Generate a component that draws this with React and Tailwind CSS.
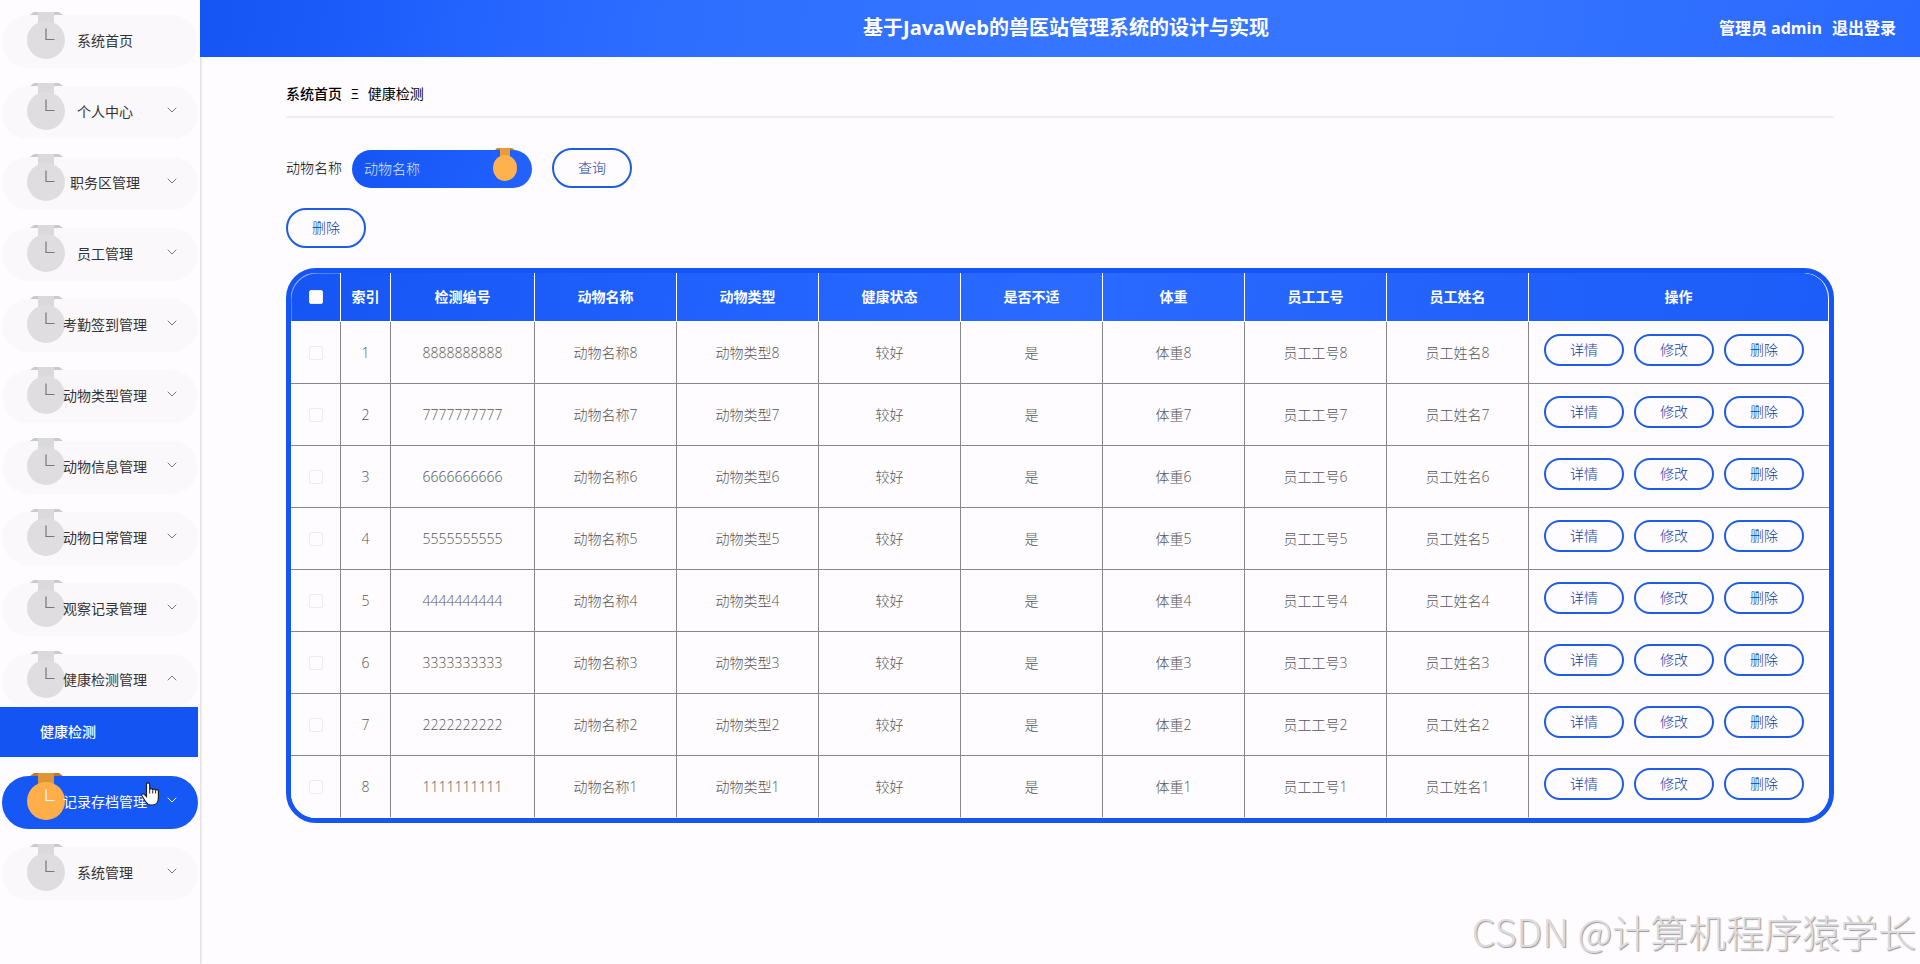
import React, { useState } from 'react';
import { ChevronDown, ChevronUp } from 'lucide-react';

const menus = [
    { name: '系统首页', leaf: true },
    { name: '个人中心' },
    { name: '职务区管理' },
    { name: '员工管理' },
    { name: '考勤签到管理' },
    { name: '动物类型管理' },
    { name: '动物信息管理' },
    { name: '动物日常管理' },
    { name: '观察记录管理' },
    { name: '健康检测管理', children: ['健康检测'] },
    { name: '记录存档管理', active: true },
    { name: '系统管理' },
];

const columns = ['检测编号', '动物名称', '动物类型', '健康状态', '是否不适', '体重', '员工工号', '员工姓名'];

const rows = [8, 7, 6, 5, 4, 3, 2, 1].map((n) => [
    String(n).repeat(10),
    `动物名称${n}`,
    `动物类型${n}`,
    '较好',
    '是',
    `体重${n}`,
    `员工工号${n}`,
    `员工姓名${n}`,
]);

const MenuMedal = ({ active }) => (
    <svg className="absolute left-6 -top-1 w-10 h-12" viewBox="0 0 40 48" aria-hidden="true">
        <path d="M4 4 L8 1 H33 L37 4 Z" fill={active ? '#c17a25' : '#cbc9cc'} />
        <rect x="12" y="1" width="16" height="14" fill={active ? '#de9437' : '#dad9db'} />
        <circle cx="20" cy="29" r="19" fill={active ? '#ffae4a' : '#dfdde0'} />
        <path d="M20 17.5 V28.5 H28.5" fill="none" stroke={active ? '#fff' : '#777'} strokeWidth="1.2" />
    </svg>
);

const MenuItem = ({ item }) => (
    <li className="mb-[18px]">
        <a
            href="#"
            className={`relative mx-[2px] flex h-[53px] items-center justify-center pb-[2px] pl-[10px] rounded-full ${
                item.active ? 'bg-[#1558f6] text-white' : 'bg-[#faf8fb] text-[#333]'
            }`}
        >
            <MenuMedal active={item.active} />
            <span className="relative">{item.name}</span>
            {!item.leaf && (
                <span className={`absolute right-[18px] top-4 ${item.active ? 'text-white' : 'text-[#777]'}`}>
                    {item.children ? (
                        <ChevronUp className="w-4 h-4" strokeWidth={1.5} />
                    ) : (
                        <ChevronDown className="w-4 h-4" strokeWidth={1.5} />
                    )}
                </span>
            )}
        </a>
        {item.children && (
            <ul className="mb-[19px]">
                {item.children.map((child) => (
                    <li key={child}>
                        <a
                            href="#"
                            className="mr-[2px] flex h-[50px] items-center bg-[#1354f2] pl-10 font-medium text-white"
                        >
                            {child}
                        </a>
                    </li>
                ))}
            </ul>
        )}
    </li>
);

const Sidebar = () => (
    <nav className="relative w-[200px] shrink-0 pt-[15px] shadow-[1px_0_2px_rgba(0,0,0,0.16)]">
        <ul>
            {menus.map((item) => (
                <MenuItem key={item.name} item={item} />
            ))}
        </ul>
        {/* hand pointer over the hovered menu */}
        <svg className="absolute left-[141px] top-[782px] w-5 h-6" viewBox="0 0 20 24" aria-hidden="true">
            <path
                d="M5.5 2.5 a1.6 1.6 0 0 1 3.2 0 V8 a1.5 1.5 0 0 1 3 .2 a1.5 1.5 0 0 1 2.9 .6 a1.4 1.4 0 0 1 2.8 .6 V15.5 c0 4-2 7.5-6 7.5 h-1.5 c-3 0-4.2-1.6-5.4-3.5 L1 14 c-1-1.8 1-3 2.3-1.6 L5.5 14.5 Z"
                fill="#fff"
                stroke="#222"
                strokeWidth="1.2"
            />
            <path d="M8.7 8 V11.5 M11.7 8.5 V11.5 M14.6 9 V11.5" stroke="#222" strokeWidth="1" />
        </svg>
    </nav>
);

const SearchMedal = () => (
    <svg className="pointer-events-none absolute right-[15px] -top-[2px] w-6 h-[34px]" viewBox="0 0 24 34" aria-hidden="true">
        <path d="M2 2 L4 0 H19 L22 2 Z" fill="#c98532" />
        <rect x="7" y="0" width="10" height="9" fill="#e89a3c" />
        <ellipse cx="12" cy="20" rx="12" ry="13" fill="#ffb14e" />
    </svg>
);

const OutlineButton = ({ small, children }) => (
    <button
        type="button"
        className={`w-20 rounded-full border-2 border-[#1f5ce6] font-light text-[#0c409f] ${small ? 'h-8' : 'h-10'}`}
    >
        {children}
    </button>
);

const Header = () => (
    <header className="relative grid h-[57px] grid-cols-[1fr_auto_1fr] items-center bg-[linear-gradient(100deg,#1455f4_0%,#1a5bfa_8%,#2666ff_18%,#2f6fff_30%,#3575ff_50%,#3575ff_72%,#2a69ff_100%)] pb-[1px] pl-9 pr-6 font-bold text-white">
        <h1 className="col-start-2 text-xl">基于JavaWeb的兽医站管理系统的设计与实现</h1>
        <div className="flex justify-end gap-[10px] text-base">
            <span>管理员 admin</span>
            <a href="#">退出登录</a>
        </div>
    </header>
);

const RecordTable = () => {
    const [checked, setChecked] = useState([]);
    const allChecked = checked.length === rows.length;

    const toggle = (idx) =>
        setChecked(checked.includes(idx) ? checked.filter((i) => i !== idx) : [...checked, idx]);

    const box = 'block mx-auto w-[14px] h-[14px] appearance-none rounded-[2px] border border-[#ecebee] bg-[#fefcff] checked:bg-[#1558f6]';

    return (
        <div className="mt-5 overflow-hidden rounded-[30px] border-[5px] border-[#1455f4] bg-[#fefcff]">
            <table className="w-full table-fixed border-separate border-spacing-0 text-center">
                <colgroup>
                    <col className="w-[50px]" />
                    <col className="w-[50px]" />
                    <col className="w-[144px]" />
                    {columns.slice(1).map((name) => (
                        <col key={name} />
                    ))}
                    <col className="w-[300px]" />
                </colgroup>
                <thead className="bg-[linear-gradient(100deg,#1455f4_0%,#2263ff_30%,#2a6aff_50%,#1c5cf8_100%)] text-white">
                    <tr className="h-[49px]">
                        <th className="rounded-tl-[25px] border-b border-r border-white shadow-[inset_1px_1px_0_-0.5px_#8fb0ff]">
                            <input
                                type="checkbox"
                                aria-label="全选"
                                className={box}
                                checked={allChecked}
                                onChange={() => setChecked(allChecked ? [] : rows.map((_, i) => i))}
                            />
                        </th>
                        <th className="border-b border-r border-white">索引</th>
                        {columns.map((name) => (
                            <th key={name} className="border-b border-r border-white">{name}</th>
                        ))}
                        <th className="rounded-tr-[25px] border-b border-r border-white">操作</th>
                    </tr>
                </thead>
                <tbody className="bg-[#fefcff] font-light text-[#555]">
                    {rows.map((row, idx) => (
                        <tr key={row[0]} className="group h-[62px]">
                            <td className="border-b border-r border-[#888] group-last:border-b-[#fefcff]">
                                <input
                                    type="checkbox"
                                    aria-label={`选择${idx + 1}`}
                                    className={box}
                                    checked={checked.includes(idx)}
                                    onChange={() => toggle(idx)}
                                />
                            </td>
                            <td className="border-b border-r border-[#888] group-last:border-b-[#fefcff]">{idx + 1}</td>
                            {row.map((value, i) => (
                                <td key={columns[i]} className="border-b border-r border-[#888] group-last:border-b-[#fefcff]">
                                    {value}
                                </td>
                            ))}
                            <td className="border-b border-[#888] pb-[6px] pl-[15px] group-last:border-b-[#fefcff]">
                                <div className="flex gap-[10px]">
                                    <OutlineButton small>详情</OutlineButton>
                                    <OutlineButton small>修改</OutlineButton>
                                    <OutlineButton small>删除</OutlineButton>
                                </div>
                            </td>
                        </tr>
                    ))}
                </tbody>
            </table>
        </div>
    );
};

export default function App() {
    return (
        <div className="relative flex min-h-screen bg-[#fefcff] font-['Open_Sans','Noto_Sans_CJK_SC',sans-serif] text-sm">
            <Sidebar />
            <div className="min-w-0 flex-1">
                <Header />
                <main className="px-[86px] pt-[25px]">
                    <div className="flex h-9 items-start gap-[9px] border-b-2 border-[#efedf0] leading-6 text-black">
                        <a href="#" className="font-medium">系统首页</a>
                        <span>Ξ</span>
                        <span>健康检测</span>
                    </div>

                    <form className="mt-[30px] flex items-center" onSubmit={(e) => e.preventDefault()}>
                        <label htmlFor="animalName" className="mr-[10px] font-light text-black">动物名称</label>
                        <div className="relative mr-5 mt-[2px]">
                            <input
                                id="animalName"
                                type="text"
                                placeholder="动物名称"
                                className="block h-[38px] w-[180px] rounded-full bg-[linear-gradient(100deg,#1455f4,#2262ff)] px-3 pb-[2px] font-light text-white placeholder:text-[#dde4f4]"
                            />
                            <SearchMedal />
                        </div>
                        <OutlineButton>查询</OutlineButton>
                    </form>

                    <div className="mt-5">
                        <OutlineButton>删除</OutlineButton>
                    </div>

                    <RecordTable />
                </main>
            </div>
            <div className="pointer-events-none absolute bottom-1 right-1 font-['Noto_Sans_CJK_SC',sans-serif] text-[38px] font-light leading-[58px] text-[#dddcde] [text-shadow:1px_1px_1px_#999]">
                CSDN @计算机程序猿学长
            </div>
        </div>
    );
}
